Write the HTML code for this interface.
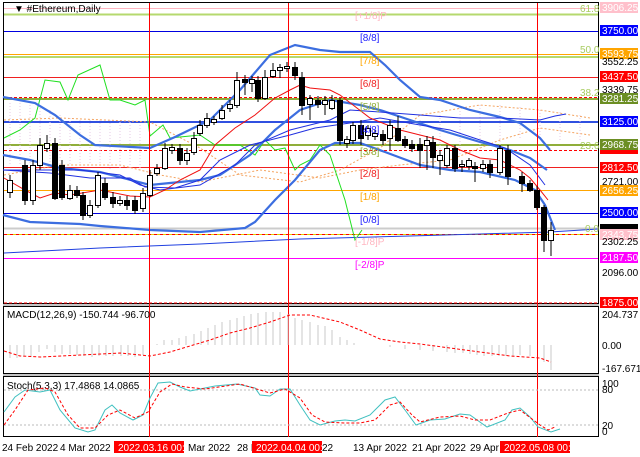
<!DOCTYPE html><html><head><style>
body{margin:0;background:#fff;width:640px;height:457px;overflow:hidden}
svg{display:block;font-family:"Liberation Sans",sans-serif}
</style></head><body>
<svg width="640" height="457" viewBox="0 0 640 457" xmlns="http://www.w3.org/2000/svg">
<rect width="640" height="457" fill="#fff"/>
<!-- frames -->
<rect x="3.5" y="2.5" width="595" height="301" fill="none" stroke="#000"/>
<rect x="3.5" y="306.5" width="595" height="67" fill="none" stroke="#000"/>
<rect x="3.5" y="376.5" width="595" height="60" fill="none" stroke="#000"/>
<line x1="3" y1="305" x2="599" y2="305" stroke="#888"/>
<line x1="3" y1="375" x2="599" y2="375" stroke="#888"/>
<!-- horizontal levels -->
<g stroke-width="1">
<line x1="4" y1="8.5" x2="598" y2="8.5" stroke="#ffb6c1"/>
<line x1="4" y1="14.5" x2="598" y2="14.5" stroke="#b5d96e" stroke-width="2"/>
<line x1="4" y1="31.5" x2="598" y2="31.5" stroke="#0000e0"/>
<line x1="4" y1="54.5" x2="598" y2="54.5" stroke="#ffa500"/>
<line x1="4" y1="57" x2="598" y2="57" stroke="#b5d96e" stroke-width="2"/>
<line x1="4" y1="77.5" x2="598" y2="77.5" stroke="#f02020"/>
<line x1="4" y1="99" x2="598" y2="99" stroke="#8fae3a" stroke-width="2"/>
<line x1="4" y1="97.5" x2="598" y2="97.5" stroke="#f00" stroke-dasharray="3,2"/>
<line x1="4" y1="122" x2="598" y2="122" stroke="#3050e0" stroke-width="2"/>
<line x1="4" y1="145" x2="598" y2="145" stroke="#8fae3a" stroke-width="2"/>
<line x1="4" y1="150.5" x2="598" y2="150.5" stroke="#f00" stroke-dasharray="3,2"/>
<line x1="4" y1="167.5" x2="598" y2="167.5" stroke="#f02020"/>
<line x1="4" y1="190.5" x2="598" y2="190.5" stroke="#ffa500"/>
<line x1="4" y1="213.5" x2="598" y2="213.5" stroke="#0000e0"/>
<line x1="4" y1="228.5" x2="598" y2="228.5" stroke="#ccc" stroke-width="2"/>
<line x1="4" y1="234.5" x2="598" y2="234.5" stroke="#e0d000"/>
<line x1="4" y1="234.5" x2="598" y2="234.5" stroke="#f00" stroke-dasharray="3,3"/>
<line x1="4" y1="258.5" x2="598" y2="258.5" stroke="#ff00ff"/>
<line x1="4" y1="303" x2="598" y2="303" stroke="#f00" stroke-dasharray="3,2"/>
</g>
<!-- slow blue line lower -->
<polyline fill="none" stroke="#2040e0" points="4,253 100,248 200,244 300,239 410,236 480,234 550,232 598,229"/>
<!-- ichimoku cloud -->
<g fill="none" stroke="#f4a460" stroke-dasharray="2,2">
<polyline points="4,120 60,118 150,122 200,148 240,175 300,182 340,170 380,148 420,115 480,105 540,110 590,118"/>
<polyline points="4,175 60,165 120,165 160,175 200,182 260,170 320,178 360,170 400,165 450,160 500,140 540,128 590,135"/>
</g>
<g stroke="#e6c8e6" stroke-dasharray="1,2" stroke-width="1">
<line x1="10" y1="103" x2="10" y2="165"/><line x1="20" y1="103" x2="20" y2="165"/><line x1="30" y1="105" x2="30" y2="165"/><line x1="40" y1="108" x2="40" y2="165"/><line x1="50" y1="110" x2="50" y2="165"/><line x1="60" y1="115" x2="60" y2="165"/><line x1="70" y1="118" x2="70" y2="165"/><line x1="80" y1="120" x2="80" y2="165"/><line x1="90" y1="120" x2="90" y2="165"/><line x1="100" y1="120" x2="100" y2="165"/><line x1="110" y1="120" x2="110" y2="170"/><line x1="120" y1="122" x2="120" y2="170"/><line x1="130" y1="122" x2="130" y2="170"/><line x1="140" y1="125" x2="140" y2="170"/>
<line x1="420" y1="120" x2="420" y2="165"/><line x1="440" y1="112" x2="440" y2="160"/><line x1="460" y1="108" x2="460" y2="155"/><line x1="480" y1="105" x2="480" y2="150"/><line x1="500" y1="105" x2="500" y2="145"/><line x1="520" y1="107" x2="520" y2="140"/><line x1="540" y1="110" x2="540" y2="140"/><line x1="560" y1="112" x2="560" y2="140"/><line x1="580" y1="115" x2="580" y2="140"/>
</g>
<!-- green chikou -->
<polyline fill="none" stroke="#20e020" points="4,138 20,130 35,118 45,80 60,82 68,100 78,75 100,65 110,100 120,100 135,105 145,100 150,136 163,125 170,138 180,137 200,135 215,145 240,145 255,155 265,140 275,150 285,148 295,170 300,165 310,160 320,145 330,155 345,200 355,240 362,230"/>
<!-- bollinger -->
<g fill="none" stroke="#3c6ee0" stroke-width="2.2">
<polyline points="3,97 35,103 55,115 80,135 95,145 150,148 175,137 210,120 240,90 270,55 295,45 320,50 340,52 370,52 385,65 400,80 420,97 440,100 470,110 500,117 520,123 540,138 550,150"/>
<polyline points="3,155 30,160 60,168 100,172 150,185 200,180 220,175 250,155 275,130 300,110 330,100 360,105 380,110 410,120 440,130 480,142 510,150 530,158 547,170"/>
<polyline points="3,215 30,222 80,224 100,226 150,230 200,232 245,228 255,222 275,200 295,180 320,150 335,143 360,143 385,152 420,165 450,170 480,172 515,180 535,190 545,205 555,230"/>
</g>
<g fill="none" stroke="#2030e0" stroke-width="1">
<polyline points="3,170 50,173 90,178 130,178 145,187 175,188 200,180 220,160 250,145 290,135 315,128 350,123 380,118 420,125 450,130 480,140 505,148 530,165 545,185"/>
<polyline points="3,170 80,170 120,175 140,185 160,190 200,185 235,165 255,145 290,130 330,120 350,110 380,112 420,115 460,118 500,118 540,120 555,116 566,114"/>
</g>
<polyline fill="none" stroke="#f01010" points="4,178 25,190 40,198 55,193 70,195 100,190 130,196 150,197 165,190 180,180 200,170 215,145 235,128 255,115 275,98 290,90 300,85 310,88 330,90 340,95 370,118 400,130 420,135 440,140 460,150 480,158 500,160 520,170 530,178 540,190 548,200"/>
<!-- vertical red lines -->
<g stroke="#f00">
<line x1="149.5" y1="3" x2="149.5" y2="437"/>
<line x1="288.5" y1="3" x2="288.5" y2="437"/>
<line x1="537.5" y1="3" x2="537.5" y2="437"/>
</g>
<!-- candles -->
<g stroke="#000" stroke-width="1">
<line x1="10" y1="175" x2="10" y2="198"/><rect x="7.5" y="180.5" width="5" height="12" fill="#fff"/>
<line x1="25" y1="160" x2="25" y2="205"/><rect x="22.5" y="165.5" width="5" height="35" fill="#000"/>
<line x1="33" y1="160" x2="33" y2="205"/><rect x="30.5" y="165.5" width="5" height="35" fill="#fff"/>
<line x1="40" y1="138" x2="40" y2="170"/><rect x="37.5" y="145.5" width="5" height="20" fill="#fff"/>
<line x1="47" y1="135" x2="47" y2="152"/><rect x="44.5" y="143.5" width="5" height="5" fill="#fff"/>
<line x1="55" y1="138" x2="55" y2="200"/><rect x="52.5" y="143.5" width="5" height="55" fill="#000"/>
<line x1="62" y1="160" x2="62" y2="200"/><rect x="59.5" y="165.5" width="5" height="32" fill="#000"/>
<line x1="70" y1="185" x2="70" y2="200"/><rect x="67.5" y="190.5" width="5" height="8" fill="#fff"/>
<line x1="77" y1="186" x2="77" y2="198"/><rect x="74.5" y="190.5" width="5" height="5" fill="#000"/>
<line x1="83" y1="192" x2="83" y2="220"/><rect x="80.5" y="195.5" width="5" height="20" fill="#000"/>
<line x1="90" y1="200" x2="90" y2="218"/><rect x="87.5" y="205.5" width="5" height="10" fill="#fff"/>
<line x1="98" y1="172" x2="98" y2="208"/><rect x="95.5" y="175.5" width="5" height="30" fill="#fff"/>
<line x1="105" y1="178" x2="105" y2="200"/><rect x="102.5" y="183.5" width="5" height="14" fill="#000"/>
<line x1="113" y1="192" x2="113" y2="208"/><rect x="110.5" y="197.5" width="5" height="6" fill="#000"/>
<line x1="120" y1="196" x2="120" y2="206"/><rect x="117.5" y="200.5" width="5" height="3" fill="#fff"/>
<line x1="127" y1="196" x2="127" y2="210"/><rect x="124.5" y="200.5" width="5" height="5" fill="#000"/>
<line x1="135" y1="196" x2="135" y2="214"/><rect x="132.5" y="200.5" width="5" height="10" fill="#000"/>
<line x1="143" y1="188" x2="143" y2="212"/><rect x="140.5" y="193.5" width="5" height="15" fill="#fff"/>
<line x1="150" y1="170" x2="150" y2="197"/><rect x="147.5" y="175.5" width="5" height="20" fill="#fff"/>
<line x1="157" y1="164" x2="157" y2="176"/><rect x="154.5" y="168.5" width="5" height="5" fill="#fff"/>
<line x1="165" y1="143" x2="165" y2="170"/><rect x="162.5" y="148.5" width="5" height="20" fill="#fff"/>
<line x1="172" y1="144" x2="172" y2="154"/><rect x="169.5" y="147.5" width="5" height="3" fill="#fff"/>
<line x1="180" y1="144" x2="180" y2="165"/><rect x="177.5" y="148.5" width="5" height="12" fill="#000"/>
<line x1="187" y1="148" x2="187" y2="165"/><rect x="184.5" y="153.5" width="5" height="7" fill="#fff"/>
<line x1="194" y1="132" x2="194" y2="155"/><rect x="191.5" y="138.5" width="5" height="14" fill="#fff"/>
<line x1="200" y1="120" x2="200" y2="136"/><rect x="197.5" y="125.5" width="5" height="8" fill="#fff"/>
<line x1="207" y1="113" x2="207" y2="128"/><rect x="204.5" y="118.5" width="5" height="7" fill="#fff"/>
<line x1="214" y1="116" x2="214" y2="125"/><rect x="211.5" y="119.5" width="5" height="3" fill="#fff"/>
<line x1="222" y1="105" x2="222" y2="120"/><rect x="219.5" y="110.5" width="5" height="8" fill="#fff"/>
<line x1="230" y1="100" x2="230" y2="112"/><rect x="227.5" y="104.5" width="5" height="4" fill="#fff"/>
<line x1="237" y1="72" x2="237" y2="108"/><rect x="234.5" y="80.5" width="5" height="25" fill="#fff"/>
<line x1="245" y1="75" x2="245" y2="95"/><rect x="242.5" y="79.5" width="5" height="3" fill="#000"/>
<line x1="252" y1="76" x2="252" y2="92"/><rect x="249.5" y="79.5" width="5" height="4" fill="#fff"/>
<line x1="258" y1="76" x2="258" y2="102"/><rect x="255.5" y="80.5" width="5" height="18" fill="#000"/>
<line x1="265" y1="70" x2="265" y2="100"/><rect x="262.5" y="77.5" width="5" height="21" fill="#fff"/>
<line x1="273" y1="63" x2="273" y2="78"/><rect x="270.5" y="70.5" width="5" height="6" fill="#fff"/>
<line x1="280" y1="64" x2="280" y2="78"/><rect x="277.5" y="67.5" width="5" height="3" fill="#fff"/>
<line x1="287" y1="62" x2="287" y2="72"/><rect x="284.5" y="66.5" width="5" height="2" fill="#fff"/>
<line x1="295" y1="62" x2="295" y2="80"/><rect x="292.5" y="67.5" width="5" height="8" fill="#000"/>
<line x1="302" y1="72" x2="302" y2="115"/><rect x="299.5" y="77.5" width="5" height="28" fill="#000"/>
<line x1="310" y1="95" x2="310" y2="120"/><rect x="307.5" y="98.5" width="5" height="6" fill="#fff"/>
<line x1="318" y1="96" x2="318" y2="108"/><rect x="315.5" y="100.5" width="5" height="4" fill="#000"/>
<line x1="325" y1="96" x2="325" y2="115"/><rect x="322.5" y="100.5" width="5" height="4" fill="#fff"/>
<line x1="332" y1="95" x2="332" y2="110"/><rect x="329.5" y="100.5" width="5" height="8" fill="#fff"/>
<line x1="340" y1="98" x2="340" y2="145"/><rect x="337.5" y="100.5" width="5" height="40" fill="#000"/>
<line x1="347" y1="136" x2="347" y2="148"/><rect x="344.5" y="139.5" width="5" height="4" fill="#fff"/>
<line x1="353" y1="122" x2="353" y2="144"/><rect x="350.5" y="125.5" width="5" height="15" fill="#fff"/>
<line x1="361" y1="120" x2="361" y2="145"/><rect x="358.5" y="125.5" width="5" height="13" fill="#000"/>
<line x1="368" y1="125" x2="368" y2="140"/><rect x="365.5" y="128.5" width="5" height="7" fill="#fff"/>
<line x1="375" y1="130" x2="375" y2="140"/><rect x="372.5" y="133.5" width="5" height="3" fill="#fff"/>
<line x1="383" y1="130" x2="383" y2="145"/><rect x="380.5" y="134.5" width="5" height="6" fill="#000"/>
<line x1="390" y1="120" x2="390" y2="150"/><rect x="387.5" y="125.5" width="5" height="13" fill="#fff"/>
<line x1="398" y1="116" x2="398" y2="142"/><rect x="395.5" y="128.5" width="5" height="12" fill="#000"/>
<line x1="405" y1="136" x2="405" y2="148"/><rect x="402.5" y="139.5" width="5" height="6" fill="#000"/>
<line x1="412" y1="140" x2="412" y2="152"/><rect x="409.5" y="144.5" width="5" height="4" fill="#000"/>
<line x1="420" y1="138" x2="420" y2="168"/><rect x="417.5" y="144.5" width="5" height="6" fill="#000"/>
<line x1="427" y1="136" x2="427" y2="170"/><rect x="424.5" y="140.5" width="5" height="5" fill="#fff"/>
<line x1="433" y1="136" x2="433" y2="168"/><rect x="430.5" y="142.5" width="5" height="15" fill="#000"/>
<line x1="440" y1="150" x2="440" y2="175"/><rect x="437.5" y="155.5" width="5" height="5" fill="#fff"/>
<line x1="447" y1="145" x2="447" y2="168"/><rect x="444.5" y="148.5" width="5" height="17" fill="#fff"/>
<line x1="455" y1="145" x2="455" y2="172"/><rect x="452.5" y="148.5" width="5" height="20" fill="#000"/>
<line x1="462" y1="160" x2="462" y2="172"/><rect x="459.5" y="164.5" width="5" height="2" fill="#fff"/>
<line x1="469" y1="158" x2="469" y2="170"/><rect x="466.5" y="160.5" width="5" height="6" fill="#fff"/>
<line x1="475" y1="162" x2="475" y2="182"/><rect x="472.5" y="166.5" width="5" height="2" fill="#000"/>
<line x1="483" y1="160" x2="483" y2="172"/><rect x="480.5" y="164.5" width="5" height="4" fill="#fff"/>
<line x1="490" y1="160" x2="490" y2="178"/><rect x="487.5" y="164.5" width="5" height="8" fill="#000"/>
<line x1="500" y1="145" x2="500" y2="175"/><rect x="497.5" y="148.5" width="5" height="24" fill="#fff"/>
<line x1="508" y1="145" x2="508" y2="185"/><rect x="505.5" y="150.5" width="5" height="26" fill="#000"/>
<line x1="522" y1="172" x2="522" y2="192"/><rect x="519.5" y="176.5" width="5" height="7" fill="#000"/>
<line x1="530" y1="180" x2="530" y2="192"/><rect x="527.5" y="183.5" width="5" height="7" fill="#000"/>
<line x1="537" y1="186" x2="537" y2="210"/><rect x="534.5" y="190.5" width="5" height="17" fill="#000"/>
<line x1="544" y1="205" x2="544" y2="252"/><rect x="541.5" y="207.5" width="5" height="33" fill="#000"/>
<line x1="551" y1="222" x2="551" y2="256"/><rect x="548.5" y="230.5" width="5" height="10" fill="#fff"/>
</g>
<!-- labels inside chart -->
<g font-size="10">
<text x="14" y="12" fill="#000">▼ #Ethereum,Daily</text>
<text x="355" y="19" fill="#ffb6c1">[+1/8]P</text>
<text x="360" y="41" fill="#2020ff">[8/8]</text>
<text x="360" y="64" fill="#ffa500">[7/8]</text>
<text x="360" y="87" fill="#f02020">[6/8]</text>
<text x="360" y="110" fill="#8fae3a">[5/8]</text>
<text x="360" y="133" fill="#2020ff">[4/8]</text>
<text x="360" y="155" fill="#8fae3a">[3/8]</text>
<text x="360" y="177" fill="#f02020">[2/8]</text>
<text x="360" y="200" fill="#ffa500">[1/8]</text>
<text x="360" y="223" fill="#2020ff">[0/8]</text>
<text x="355" y="245" fill="#ffb6c1">[-1/8]P</text>
<text x="355" y="268" fill="#ff00ff">[-2/8]P</text>
<text x="580" y="12" fill="#a8cc60">61.8</text>
<text x="580" y="53" fill="#a8cc60">50.0</text>
<text x="580" y="96" fill="#a8cc60">38.2</text>
<text x="580" y="149" fill="#a8cc60">23.6</text>
<text x="585" y="232" fill="#a8cc60">0.0</text>
<text x="7" y="318" fill="#000">MACD(12,26,9) -150.744 -96.700</text>
<text x="7" y="389" fill="#000">Stoch(5,3,3) 17.4868 14.0865</text>
</g>
<!-- right axis labels -->
<g font-size="10">
<rect x="600" y="2" width="38" height="11" fill="#ffc0cb"/><text x="602" y="11" fill="#fff">3906.25</text>
<rect x="600" y="25" width="38" height="11" fill="#0000ff"/><text x="602" y="34" fill="#fff">3750.00</text>
<rect x="600" y="48" width="38" height="11" fill="#ffa500"/><text x="602" y="57" fill="#fff">3593.75</text>
<text x="602" y="65" fill="#000">3552.25</text>
<rect x="600" y="71" width="38" height="11" fill="#ff0000"/><text x="602" y="80" fill="#fff">3437.50</text>
<text x="602" y="93" fill="#000">3339.75</text>
<rect x="600" y="93" width="38" height="11" fill="#6b8e23"/><text x="602" y="102" fill="#fff">3281.25</text>
<rect x="600" y="116" width="38" height="11" fill="#0000ff"/><text x="602" y="125" fill="#fff">3125.00</text>
<rect x="600" y="146" width="38" height="8" fill="#ff0000"/>
<rect x="600" y="139" width="38" height="11" fill="#6b8e23"/><text x="602" y="148" fill="#fff">2968.75</text>
<rect x="600" y="162" width="38" height="11" fill="#ff0000"/><text x="602" y="171" fill="#fff">2812.50</text>
<text x="602" y="185" fill="#000">2721.00</text>
<rect x="600" y="185" width="38" height="11" fill="#ffa500"/><text x="602" y="194" fill="#fff">2656.25</text>
<rect x="600" y="207" width="38" height="11" fill="#0000ff"/><text x="602" y="216" fill="#fff">2500.00</text>
<rect x="600" y="224" width="38" height="7" fill="#000"/>
<rect x="600" y="229" width="38" height="11" fill="#ffc0cb"/><text x="602" y="238" fill="#fff">2343.75</text>
<text x="602" y="245" fill="#000">2302.25</text>
<rect x="600" y="252" width="38" height="11" fill="#ff00ff"/><text x="602" y="261" fill="#fff">2187.50</text>
<text x="602" y="276" fill="#000">2096.00</text>
<rect x="600" y="297" width="38" height="11" fill="#ff0000"/><text x="602" y="306" fill="#fff">1875.00</text>
<text x="602" y="318" fill="#000">204.737</text>
<text x="602" y="349" fill="#000">0.00</text>
<text x="602" y="372" fill="#000">-167.671</text>
<text x="602" y="387" fill="#000">100</text>
<text x="602" y="393" fill="#000">80</text>
<text x="602" y="429" fill="#000">20</text>
<text x="602" y="435" fill="#000">0</text>
</g>
<!-- MACD -->
<g stroke="#c8c8c8" stroke-width="1">
<line x1="10" y1="345" x2="10" y2="358"/><line x1="17" y1="345" x2="17" y2="358"/><line x1="24" y1="345" x2="24" y2="356"/><line x1="31" y1="345" x2="31" y2="357"/><line x1="39" y1="345" x2="39" y2="352"/><line x1="47" y1="345" x2="47" y2="349"/><line x1="55" y1="345" x2="55" y2="352"/><line x1="62" y1="345" x2="62" y2="354"/><line x1="70" y1="345" x2="70" y2="354"/><line x1="77" y1="345" x2="77" y2="355"/><line x1="84" y1="345" x2="84" y2="356"/><line x1="92" y1="345" x2="92" y2="357"/><line x1="99" y1="345" x2="99" y2="356"/><line x1="106" y1="345" x2="106" y2="356"/><line x1="113" y1="345" x2="113" y2="356"/><line x1="121" y1="345" x2="121" y2="356"/><line x1="128" y1="345" x2="128" y2="356"/><line x1="135" y1="345" x2="135" y2="357"/><line x1="143" y1="345" x2="143" y2="355"/>
<line x1="157" y1="345" x2="157" y2="344"/><line x1="164" y1="340" x2="164" y2="345"/><line x1="172" y1="340" x2="172" y2="345"/><line x1="179" y1="338" x2="179" y2="345"/><line x1="186" y1="336" x2="186" y2="345"/><line x1="194" y1="334" x2="194" y2="345"/><line x1="201" y1="331" x2="201" y2="345"/><line x1="208" y1="328" x2="208" y2="345"/><line x1="215" y1="325" x2="215" y2="345"/><line x1="222" y1="322" x2="222" y2="345"/><line x1="230" y1="320" x2="230" y2="345"/><line x1="237" y1="318" x2="237" y2="345"/><line x1="244" y1="316" x2="244" y2="345"/><line x1="251" y1="314" x2="251" y2="345"/><line x1="258" y1="313" x2="258" y2="345"/><line x1="266" y1="312" x2="266" y2="345"/><line x1="273" y1="312" x2="273" y2="345"/><line x1="280" y1="312" x2="280" y2="345"/><line x1="288" y1="314" x2="288" y2="345"/><line x1="295" y1="318" x2="295" y2="345"/><line x1="302" y1="320" x2="302" y2="345"/><line x1="310" y1="322" x2="310" y2="345"/><line x1="318" y1="325" x2="318" y2="345"/><line x1="325" y1="326" x2="325" y2="345"/><line x1="332" y1="330" x2="332" y2="345"/><line x1="340" y1="337" x2="340" y2="345"/><line x1="347" y1="340" x2="347" y2="345"/><line x1="354" y1="343" x2="354" y2="345"/>
<line x1="390" y1="345" x2="390" y2="347"/><line x1="405" y1="345" x2="405" y2="349"/><line x1="420" y1="345" x2="420" y2="350"/><line x1="433" y1="345" x2="433" y2="351"/><line x1="447" y1="345" x2="447" y2="352"/><line x1="455" y1="345" x2="455" y2="353"/><line x1="463" y1="345" x2="463" y2="353"/><line x1="470" y1="345" x2="470" y2="354"/><line x1="477" y1="345" x2="477" y2="355"/><line x1="484" y1="345" x2="484" y2="356"/><line x1="492" y1="345" x2="492" y2="356"/><line x1="499" y1="345" x2="499" y2="356"/><line x1="506" y1="345" x2="506" y2="356"/><line x1="513" y1="345" x2="513" y2="356"/><line x1="520" y1="345" x2="520" y2="355"/><line x1="530" y1="345" x2="530" y2="356"/><line x1="544" y1="345" x2="544" y2="362"/><line x1="551" y1="345" x2="551" y2="370"/>
</g>
<polyline fill="none" stroke="#f00" stroke-dasharray="3,2" points="4,351 20,356 40,357 80,355 120,353 150,356 170,352 190,346 210,340 230,333 250,328 270,322 290,315 310,315 340,322 360,330 380,339 400,342 420,344 450,348 480,352 510,356 540,358 551,362"/>
<!-- Stoch -->
<line x1="4" y1="390" x2="598" y2="390" stroke="#bbb" stroke-dasharray="2,2"/>
<line x1="4" y1="425" x2="598" y2="425" stroke="#bbb" stroke-dasharray="2,2"/>
<polyline fill="none" stroke="#40c0c0" points="4,412 15,397 25,390 40,392 50,390 60,410 75,428 88,432 95,430 105,410 112,405 120,413 133,420 143,415 150,398 158,383 170,382 180,387 190,391 200,389 215,386 237,384 255,388 260,395 270,396 280,389 290,389 300,405 310,420 320,425 335,421 345,420 355,421 370,415 385,400 395,397 405,410 416,425 430,420 445,419 460,414 470,415 487,427 505,420 512,410 520,408 530,417 538,427 551,432 560,429"/>
<polyline fill="none" stroke="#f00" stroke-dasharray="3,2" points="4,425 15,410 28,390 45,388 55,392 68,415 80,428 95,428 108,415 120,410 135,418 148,412 160,392 172,384 185,387 205,389 240,384 260,390 270,393 285,389 300,398 312,415 325,422 345,423 360,423 375,420 390,405 400,402 412,415 420,422 440,417 460,416 475,420 490,420 508,413 520,410 540,425 548,430 555,427"/>
<!-- date labels -->
<g font-size="10" fill="#000">
<text x="2" y="451">24 Feb 2022</text>
<text x="60" y="451">4 Mar 2022</text>
<rect x="114" y="441" width="70" height="12" fill="#f00"/><text x="118" y="451" fill="#fff">2022.03.16 00:00</text>
<text x="188" y="451">Mar 2022</text>
<text x="237" y="451">28 M</text>
<rect x="252" y="441" width="70" height="12" fill="#f00"/><text x="256" y="451" fill="#fff">2022.04.04 00:00</text>
<text x="322" y="451">22</text>
<text x="353" y="451">13 Apr 2022</text>
<text x="412" y="451">21 Apr 2022</text>
<text x="470" y="451">29 Apr</text>
<rect x="500" y="441" width="70" height="12" fill="#f00"/><text x="504" y="451" fill="#fff">2022.05.08 00:00</text>
</g>
</svg>
</body></html>
